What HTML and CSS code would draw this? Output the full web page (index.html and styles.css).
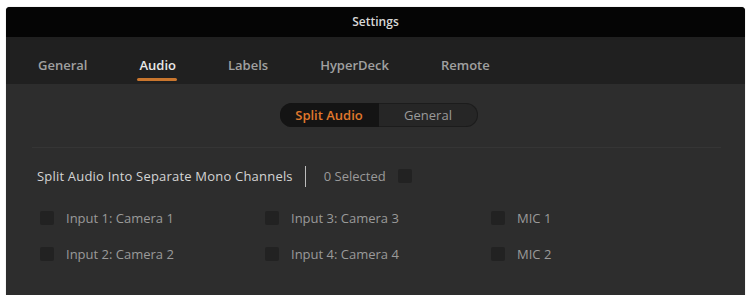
FILE: index.html
```html
<!DOCTYPE html>
<html lang="en">
<head>
  <meta charset="UTF-8">
  <title>Settings</title>
  <link rel="stylesheet" href="styles.css">
</head>
<body>
  <div class="window">
    <!-- Title bar -->
    <div class="titlebar">Settings</div>

    <!-- Tabs -->
    <nav class="tabs">
      <span class="tab">General</span>
      <span class="tab active">Audio</span>
      <span class="tab">Labels</span>
      <span class="tab">HyperDeck</span>
      <span class="tab">Remote</span>
    </nav>

    <!-- Content -->
    <main class="content">
      <div class="segments">
        <span class="segment selected">Split Audio</span>
        <span class="segment">General</span>
      </div>

      <hr class="divider">

      <div class="split-row">
        <span class="split-label">Split Audio Into Separate Mono Channels</span>
        <span class="vbar"></span>
        <span class="count">0 Selected</span>
        <span class="box"></span>
      </div>

      <div class="inputs">
        <label class="item"><span class="box"></span>Input 1: Camera 1</label>
        <label class="item"><span class="box"></span>Input 3: Camera 3</label>
        <label class="item"><span class="box"></span>MIC 1</label>
        <label class="item"><span class="box"></span>Input 2: Camera 2</label>
        <label class="item"><span class="box"></span>Input 4: Camera 4</label>
        <label class="item"><span class="box"></span>MIC 2</label>
      </div>
    </main>
  </div>
</body>
</html>
```

FILE: styles.css
```css
/* General */
body {
  margin: 0;
  padding: 7px 3px 0 6px;
  background: #fff;
  font-family: 'Open Sans', sans-serif;
  font-size: 13px;
  color: #c8c8c8;
}

.window {
  height: 288px;
  background: #2d2d2d;
  border-radius: 4px 4px 0 0;
  overflow: hidden;
  box-shadow: 0 0 1px #999;
}

/* Title bar */
.titlebar {
  height: 30px;
  line-height: 30px;
  background: #050505;
  text-align: center;
  color: #d8d8d8;
  font-size: 12px;
  font-weight: 600;
}

/* Tabs */
.tabs {
  display: flex;
  height: 47px;
  padding-left: 32px;
  gap: 52px;
  background: #202020;
}

.tab {
  position: relative;
  padding-top: 19px;
  font-size: 13px;
  font-weight: 600;
  color: #a0a0a0;
}

.tab.active {
  color: #e8e8e8;
}

.tab.active::after {
  content: '';
  position: absolute;
  left: -2px;
  right: -1px;
  bottom: 3px;
  height: 3px;
  border-radius: 2px;
  background: #c9762e;
}

/* Content */
.content {
  padding: 19px 24px 0 26px;
}

.segments {
  display: flex;
  width: 198px;
  height: 24px;
  margin: 0 auto;
  transform: translateX(2px);
  border-radius: 12px;
  background: #262626;
  box-shadow: inset 0 0 0 1px #1c1c1c;
  overflow: hidden;
}

.segment {
  flex: 1;
  line-height: 24px;
  text-align: center;
  font-size: 13px;
  color: #9a9a9a;
}

.segment.selected {
  background: #141414;
  color: #e0782c;
  font-weight: 600;
}

.divider {
  margin: 20px 0 0;
  border: 0;
  border-top: 1px solid #353535;
}

.split-row {
  display: flex;
  align-items: center;
  height: 22px;
  margin: 17px 0 0 5px;
}

.split-label {
  color: #d4d4d4;
  letter-spacing: 0.2px;
}

.vbar {
  width: 1px;
  height: 21px;
  margin: 0 18px 0 12px;
  background: #bdbdbd;
}

.count {
  color: #9a9a9a;
  margin-right: 12px;
}

.box {
  display: inline-block;
  width: 14px;
  height: 14px;
  border-radius: 2px;
  background: #222;
}

.inputs {
  display: grid;
  grid-template-columns: 225px 226px auto;
  row-gap: 21px;
  margin: 23px 0 0 8px;
}

.item {
  display: flex;
  align-items: center;
  gap: 12px;
  height: 15px;
  color: #9a9a9a;
}
```
